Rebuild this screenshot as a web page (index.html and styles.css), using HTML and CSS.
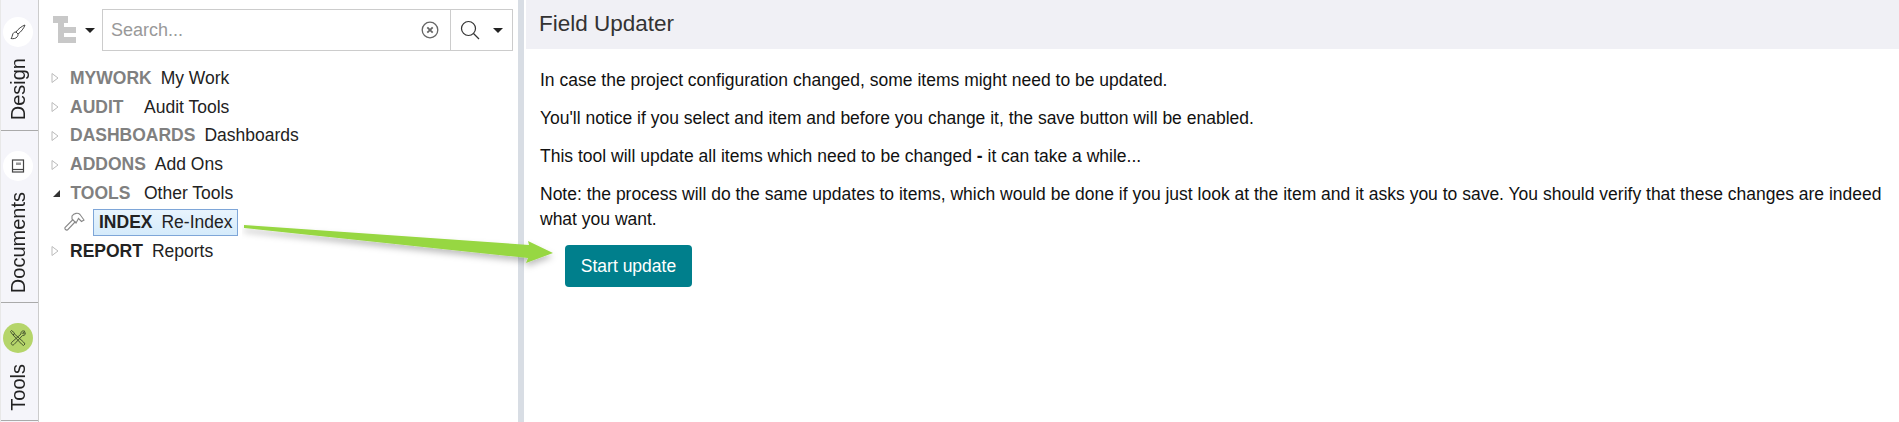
FILE: index.html
```html
<!DOCTYPE html>
<html lang="en">
<head>
    <meta charset="UTF-8">
    <title>Field Updater</title>
    <link rel="stylesheet" href="styles.css">
</head>
<body>
    <div class="app">
        <div class="rail">
            <div class="tab tab-design">
                <span class="tab-icon">
                    <svg width="18" height="18" viewBox="0 0 18 18" fill="none" stroke="#444" stroke-width="1">
                        <path d="M16 2 C13 3 9 6 7 9 L9 11 C12 9 15 5 16 2 Z"/>
                        <path d="M7 9 C5 9 4 10 3.500 12 C3 14 2.500 15 2 15.500 C4 16 7 15.500 8 14 C9 13 9 12 9 11 Z"/>
                    </svg>
                </span>
                <span class="tab-label">Design</span>
            </div>
            <div class="tab tab-docs">
                <span class="tab-icon">
                    <svg width="16" height="16" viewBox="0 0 16 16" fill="none" stroke="#444" stroke-width="1.200">
                        <rect x="2.500" y="2" width="11" height="12"/>
                        <path d="M2.500 11.500 H13.500"/>
                        <rect x="6" y="4.500" width="5" height="2.500" fill="#999" stroke="none"/>
                    </svg>
                </span>
                <span class="tab-label">Documents</span>
            </div>
            <div class="tab tab-tools">
                <span class="tab-icon icon-active">
                    <svg width="18" height="18" viewBox="0 0 18 18" fill="none" stroke="#3c4a2a" stroke-width="0.900">
                        <path d="M2.500 1.500 L5.500 4 L5 5.500 L3.500 5.500 L1.500 2.500 Z"/>
                        <path d="M5.500 5 L14.500 13 L16 15 L14.500 16.500 L12.500 15 L4 6"/>
                        <path d="M16 2.500 C14 1 11.500 2.500 12 5 L2.500 13.500 C1.500 15 3.500 17 5 15.500 L13.500 6.500 C15.500 7 17 5 16.200 3.500 L14.500 5 L13.500 4 Z"/>
                    </svg>
                </span>
                <span class="tab-label">Tools</span>
            </div>
        </div>

        <div class="tree-panel">
            <div class="toolbar">
                <button class="tree-toggle">
                    <svg width="24" height="28" viewBox="0 0 24 28" fill="#c8c8c8">
                        <rect x="0" y="0" width="15" height="7"/>
                        <rect x="5" y="7" width="6" height="20"/>
                        <rect x="5" y="11" width="18" height="6"/>
                        <rect x="5" y="21" width="18" height="6"/>
                    </svg>
                    <span class="caret"></span>
                </button>
                <div class="search">
                    <span class="search-text">Search...</span>
                    <svg class="clear-icon" width="18" height="18" viewBox="0 0 18 18" fill="none" stroke="#666">
                        <circle cx="9" cy="9" r="7.800" stroke-width="1.300"/>
                        <path d="M6.300 6.300 L11.700 11.700 M11.700 6.300 L6.300 11.700" stroke-width="1.800"/>
                    </svg>
                    <div class="search-btn">
                        <svg width="20" height="20" viewBox="0 0 20 20" fill="none" stroke="#333" stroke-width="1.200">
                            <circle cx="8.500" cy="8.500" r="7"/>
                            <path d="M13.500 13.500 L19 19"/>
                        </svg>
                        <span class="caret"></span>
                    </div>
                </div>
            </div>

            <ul class="tree">
                <li class="node"><svg class="arrow" width="8" height="12" viewBox="0 0 8 12"><path d="M1 1.500 L7 6 L1 10.500 Z" fill="white" stroke="#bbb"/></svg><b class="dim">MYWORK</b><span>My Work</span></li>
                <li class="node"><svg class="arrow" width="8" height="12" viewBox="0 0 8 12"><path d="M1 1.500 L7 6 L1 10.500 Z" fill="white" stroke="#bbb"/></svg><b class="dim code-audit">AUDIT</b><span>Audit Tools</span></li>
                <li class="node"><svg class="arrow" width="8" height="12" viewBox="0 0 8 12"><path d="M1 1.500 L7 6 L1 10.500 Z" fill="white" stroke="#bbb"/></svg><b class="dim">DASHBOARDS</b><span>Dashboards</span></li>
                <li class="node"><svg class="arrow" width="8" height="12" viewBox="0 0 8 12"><path d="M1 1.500 L7 6 L1 10.500 Z" fill="white" stroke="#bbb"/></svg><b class="dim">ADDONS</b><span>Add Ons</span></li>
                <li class="node"><span class="arrow-open"></span><b class="dim code-tools">TOOLS</b><span>Other Tools</span></li>
                <li class="node child">
                    <svg class="hammer" width="21" height="21" viewBox="0 0 21 21" fill="none" stroke="#888" stroke-width="1.100">
                        <path d="M9 7.500 L1 15.500 C0.500 17 2 18.500 3.500 18 L11.500 9.500"/>
                        <path d="M8 4 C10 1 14 0.500 16 2.500 L20 8 L17.500 9.500 L14.500 6.500 L12 11 L8 7 Z"/>
                    </svg>
                    <div class="selected"><b>INDEX</b><span>Re-Index</span></div>
                </li>
                <li class="node"><svg class="arrow" width="8" height="12" viewBox="0 0 8 12"><path d="M1 1.500 L7 6 L1 10.500 Z" fill="white" stroke="#bbb"/></svg><b>REPORT</b><span>Reports</span></li>
            </ul>
        </div>

        <div class="divider"></div>

        <div class="main">
            <div class="main-title">Field Updater</div>
            <div class="main-body">
                <p>In case the project configuration changed, some items might need to be updated.</p>
                <p>You'll notice if you select and item and before you change it, the save button will be enabled.</p>
                <p>This tool will update all items which need to be changed <b>-</b> it can take a while...</p>
                <p>Note: the process will do the same updates to items, which would be done if you just look at the item and it asks you to save. You should verify that these changes are indeed what you want.</p>
                <button class="start-btn">Start update</button>
            </div>
        </div>
    </div>

    <svg class="callout" width="340" height="60" viewBox="0 0 340 60">
        <defs>
            <filter id="soft" x="-5%" y="-30%" width="110%" height="180%">
                <feDropShadow dx="0" dy="4" stdDeviation="3" flood-color="#000" flood-opacity="0.25"/>
            </filter>
        </defs>
        <path d="M2 1 L287 21 L286 17 L311 29 L284 39 L286 34 L2 4 Z" fill="#97d742" filter="url(#soft)"/>
    </svg>
</body>
</html>
```

FILE: styles.css
```css
html, body {
    margin: 0;
    height: 100%;
}
body {
    font-family: "Liberation Sans", Arial, sans-serif;
    font-size: 17.500px;
    color: #222;
    background-color: white;
    overflow: hidden;
    position: relative;
}
.app {
    display: flex;
    height: 422px;
}

/* left tabs */
.rail {
    width: 37px;
    flex: none;
    background-color: #f5f5fa;
    border-right: 1px solid #ccc;
    border-left: 1px solid #e8e8e8;
    box-sizing: content-box;
    display: flex;
    flex-direction: column;
}
.tab {
    display: flex;
    flex-direction: column;
    align-items: center;
    border-bottom: 1px solid #aaa;
    box-sizing: border-box;
    padding-right: 3px;
}
.tab-design {
    height: 131px;
    padding-top: 17px;
}
.tab-docs {
    height: 172px;
    padding-top: 20px;
}
.tab-tools {
    height: 118px;
    padding-top: 20px;
}
.tab-icon {
    width: 30px;
    height: 30px;
    border-radius: 50%;
    background-color: white;
    display: flex;
    align-items: center;
    justify-content: center;
    flex: none;
}
.icon-active {
    background-color: #b5d56a;
}
.tab-label {
    writing-mode: vertical-rl;
    transform: rotate(180deg);
    font-size: 20px;
    line-height: 24px;
    color: #222;
    margin-top: 11px;
}

/* tree */
.tree-panel {
    width: 479px;
    flex: none;
    box-sizing: border-box;
    padding: 9px 5px 0 12px;
}
.toolbar {
    display: flex;
    align-items: center;
}
.tree-toggle {
    display: flex;
    align-items: center;
    gap: 8px;
    width: 51px;
    padding: 0 0 0 2px;
    border: none;
    background: none;
    flex: none;
}
.caret {
    display: inline-block;
    width: 0;
    height: 0;
    border-left: 5px solid transparent;
    border-right: 5px solid transparent;
    border-top: 5px solid #222;
}
.search {
    flex: 1;
    height: 42px;
    box-sizing: border-box;
    border: 1px solid #ccc;
    display: flex;
    align-items: center;
    padding-left: 8px;
}
.search-text {
    flex: 1;
    color: #999;
    font-size: 18px;
}
.clear-icon {
    margin-right: 11px;
}
.search-btn {
    width: 62px;
    height: 100%;
    box-sizing: border-box;
    border-left: 1px solid #ccc;
    display: flex;
    align-items: center;
    gap: 13px;
    padding-left: 9px;
}
.tree {
    list-style: none;
    margin: 13px 0 0;
    padding: 0;
}
.node {
    display: flex;
    align-items: center;
    height: 28.800px;
    gap: 9px;
    white-space: nowrap;
}
.node b {
    font-weight: bold;
}
.dim {
    color: #808080;
}
.code-audit {
    width: 65px;
}
.code-tools {
    width: 64.500px;
}
.arrow {
    flex: none;
    margin-left: 0;
    margin-right: 2px;
}
.arrow-open {
    width: 0;
    height: 0;
    margin-left: 2px;
    margin-right: 1.500px;
    border-right: 7px solid #333;
    border-top: 7px solid transparent;
}
.child {
    padding-left: 13px;
    gap: 8px;
}
.selected {
    display: flex;
    gap: 9px;
    height: 27px;
    align-items: center;
    padding: 0 4px 0 5px;
    border: 1px solid #7ea6d8;
    background: linear-gradient(#e8f4fd, #d5ebfb);
    box-sizing: border-box;
}

/* resize bar */
.divider {
    width: 6px;
    flex: none;
    background-color: #d8dde4;
}

/* right side */
.main {
    flex: 1;
    padding-left: 2px;
}
.main-title {
    height: 49px;
    box-sizing: border-box;
    background-color: #f0f0f5;
    font-size: 22.500px;
    color: #333;
    line-height: 47px;
    padding-left: 13px;
}
.main-body {
    padding: 19px 15px 0 14px;
    color: #111;
    font-size: 17.500px;
    line-height: 25px;
}
.main-body p {
    margin: 0 0 13px;
}
.start-btn {
    display: block;
    margin: 1px 0 0 25px;
    width: 127px;
    height: 42px;
    border: none;
    border-radius: 4px;
    background-color: #007f8c;
    color: white;
    font-family: "Liberation Sans", Arial, sans-serif;
    font-size: 17.500px;
    padding: 0;
}

/* green arrow drawn on top of the screenshot */
.callout {
    position: absolute;
    left: 242px;
    top: 224px;
}
```
